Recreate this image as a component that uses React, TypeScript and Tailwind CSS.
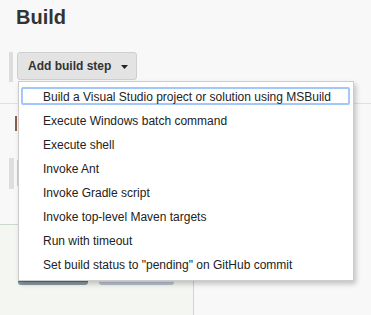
const steps = [
  'Build a Visual Studio project or solution using MSBuild',
  'Execute Windows batch command',
  'Execute shell',
  'Invoke Ant',
  'Invoke Gradle script',
  'Invoke top-level Maven targets',
  'Run with timeout',
  'Set build status to "pending" on GitHub commit',
];

export default function App() {
  return (
    <div className="relative w-[371px] h-[315px] overflow-hidden bg-[#f8f8f8] text-[#333] font-['Liberation_Sans',Arial,sans-serif]">
      <h2 className="pl-[16px] pt-[5px] h-[52px] text-[20px] leading-[24px] font-bold">Build</h2>

      {/* add step button */}
      <div className="flex h-[30px]">
        <div className="ml-[9px] w-[4px] h-[30px] bg-[#dddddd]" />
        <button className="ml-[4px] flex items-center h-[28px] w-[120px] pl-[10px] rounded-[3px] border border-[#cfcfcf] bg-[#e3e3e3] text-[12px] font-bold text-[#333]">
          Add build step
          <svg width="7" height="4" viewBox="0 0 7 4" className="ml-[10px] mt-[1px]">
            <path d="M0 0h7L3.5 4z" fill="#222" />
          </svg>
        </button>
      </div>

      {/* stuff hidden behind the menu */}
      <div className="mt-[21px] h-px bg-[#e0e0e0]" />
      <div className="ml-[15px] mt-[12px] w-[2px] h-[15px] bg-[#8a5c4c]" />
      <div className="flex mt-[27px] h-[31px]">
        <div className="ml-[9px] w-[5px] h-[31px] bg-[#dedede]" />
        <div className="ml-[3px] mt-[2px] w-px h-[26px] bg-[#cfcfcf]" />
      </div>

      <div className="mt-[35px] w-[194px] h-[91px] border-t border-r border-[#c9dacb] bg-[#f3f6f1] flex gap-[11px] pl-[18px] pt-[33px]">
        <div className="w-[70px] h-[27px] rounded-[3px] bg-[#5f7078] border-b-[3px] border-[#8a9aa2]" />
        <div className="w-[75px] h-[27px] rounded-[3px] bg-[#e6eaef] border-b-[3px] border-[#b9c3d0]" />
      </div>

      {/* dropdown menu */}
      <div className="absolute left-[18px] top-[81px] w-[336px] h-[200px] bg-white border border-[#cccccc] py-[3px] shadow-[2px_3px_5px_rgba(0,0,0,0.22)]">
        {steps.map((s, i) => (
          <div key={s} className="relative h-[24px] pl-[24px] text-[12px] leading-[24px] text-[#222]">
            {i === 0 && (
              <div className="absolute left-[2px] right-[3px] top-[2px] h-[18px] rounded-[2px] border-2 border-[#a3c6fb]" />
            )}
            <span className="relative">{s}</span>
          </div>
        ))}
      </div>
    </div>
  );
}
